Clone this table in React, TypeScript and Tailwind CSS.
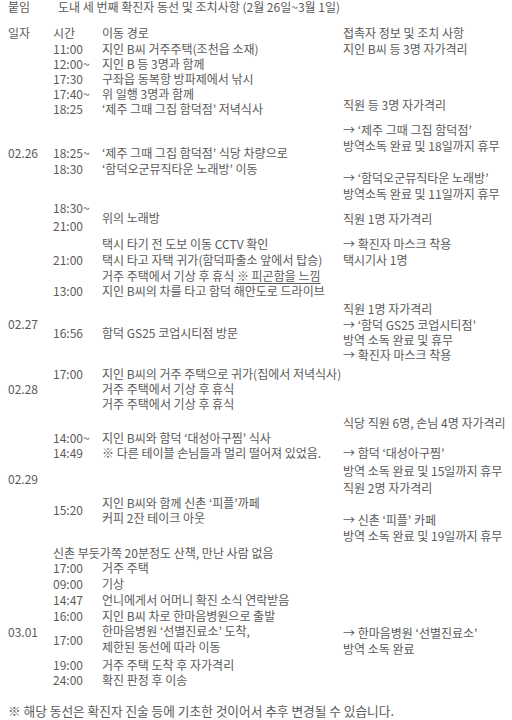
type Row = {
  time?: string;
  route?: React.ReactNode;
  cls: string;
};

const routeRows: Row[] = [
  { time: "11:00", route: "지인 B씨 거주주택(조천읍 소재)", cls: "mt-[1px]" },
  { time: "12:00~", route: "지인 B 등 3명과 함께", cls: "mt-0" },
  { time: "17:30", route: "구좌읍 동복항 방파제에서 낚시", cls: "mt-0" },
  { time: "17:40~", route: "위 일행 3명과 함께", cls: "mt-0" },
  { time: "18:25", route: "‘제주 그때 그집 함덕점’ 저녁식사", cls: "mt-0" },
  { time: "18:25~", route: "‘제주 그때 그집 함덕점’ 식당 차량으로", cls: "mt-[29px]" },
  { time: "18:30", route: "‘함덕오군뮤직타운 노래방’ 이동", cls: "mt-[1px]" },
];

const contacts: { text: string; cls: string }[] = [
  { text: "지인 B씨 등 3명 자가격리", cls: "mt-[1px]" },
  { text: "직원 등 3명 자가격리", cls: "mt-[41px]" },
  { text: "→ ‘제주 그때 그집 함덕점’", cls: "mt-[10px]" },
  { text: "방역소독 완료 및 18일까지 휴무", cls: "mt-[1px]" },
  { text: "→ ‘함덕오군뮤직타운 노래방’", cls: "mt-[17px]" },
  { text: "방역소독 완료 및 11일까지 휴무", cls: "mt-[1px]" },
  { text: "직원 1명 자가격리", cls: "mt-[10px]" },
  { text: "→ 확진자 마스크 착용", cls: "mt-[10px]" },
  { text: "택시기사 1명", cls: "mt-[1px]" },
  { text: "직원 1명 자가격리", cls: "mt-[34px]" },
  { text: "→ ‘함덕 GS25 코업시티점’", cls: "mt-[1px]" },
  { text: "방역 소독 완료 및 휴무", cls: "mt-0" },
  { text: "→ 확진자 마스크 착용", cls: "mt-0" },
  { text: "식당 직원 6명, 손님 4명 자가격리", cls: "mt-[53px]" },
  { text: "→ 함덕 ‘대성아구찜’", cls: "mt-[15px]" },
  { text: "방역 소독 완료 및 15일까지 휴무", cls: "mt-[3px]" },
  { text: "직원 2명 자가격리", cls: "mt-[2px]" },
  { text: "→ 신촌 ‘피플’ 카페", cls: "mt-[17px]" },
  { text: "방역 소독 완료 및 19일까지 휴무", cls: "mt-[1px]" },
  { text: "→ 한마음병원 ‘선별진료소’", cls: "mt-[82px]" },
  { text: "방역 소독 완료", cls: "mt-[1px]" },
];

function Line({ time, route, cls }: Row) {
  return (
    <div className={`flex h-[15px] items-center ${cls}`}>
      <span className="w-[49px] shrink-0">{time}</span>
      <span className="whitespace-nowrap">{route}</span>
    </div>
  );
}

export default function App() {
  return (
    <div className="w-[512px] h-[720px] overflow-hidden bg-white pl-[8px] text-[12px] leading-[15px] text-[#5a5a5a] font-['Noto_Sans_CJK_KR','Noto_Sans',sans-serif]">
      {/* 제목 */}
      <div className="flex h-[14px] items-center leading-[14px]">
        <span className="w-[50px]">붙임</span>
        <span className="whitespace-nowrap">도내 세 번째 확진자 동선 및 조치사항 (2월 26일~3월 1일)</span>
      </div>

      <div className="mt-[10.5px] flex">
        {/* 일자 */}
        <div className="flex w-[45px] shrink-0 flex-col">
          <div className="h-[15px]">일자</div>
          <div className="mt-[105px] h-[15px]">02.26</div>
          <div className="mt-[156px] h-[15px]">02.27</div>
          <div className="mt-[50px] h-[15px]">02.28</div>
          <div className="mt-[75px] h-[15px]">02.29</div>
          <div className="mt-[138px] h-[15px]">03.01</div>
        </div>

        {/* 시간 / 이동 경로 */}
        <div className="flex w-[290px] shrink-0 flex-col">
          <Line time="시간" route="이동 경로" cls="" />
          {routeRows.map((r, i) => (
            <Line key={i} {...r} />
          ))}

          <div className="mt-[23.5px] flex items-center">
            <div className="flex w-[49px] shrink-0 flex-col leading-[18px]">
              <span>18:30~</span>
              <span>21:00</span>
            </div>
            <span>위의 노래방</span>
          </div>
          <Line route="택시 타기 전 도보 이동 CCTV 확인" cls="mt-[0.5px]" />
          <Line time="21:00" route="택시 타고 자택 귀가(함덕파출소 앞에서 탑승)" cls="mt-[1px]" />
          <Line
            route={
              <>
                거주 주택에서 기상 후 휴식 <span className="underline underline-offset-2">※ 피곤함을 느낌</span>
              </>
            }
            cls="mt-[1px]"
          />
          <Line time="13:00" route="지인 B씨의 차를 타고 함덕 해안도로 드라이브" cls="mt-0" />
          <Line time="16:56" route="함덕 GS25 코업시티점 방문" cls="mt-[27px]" />
          <Line time="17:00" route="지인 B씨의 거주 주택으로 귀가(집에서 저녁식사)" cls="mt-[26px]" />
          <Line route="거주 주택에서 기상 후 휴식" cls="mt-0" />
          <Line route="거주 주택에서 기상 후 휴식" cls="mt-0" />
          <Line time="14:00~" route="지인 B씨와 함덕 ‘대성아구찜’ 식사" cls="mt-[19px]" />
          <Line time="14:49" route="※ 다른 테이블 손님들과 멀리 떨어져 있었음." cls="mt-0" />

          <div className="mt-[35px] flex items-center">
            <span className="w-[49px] shrink-0">15:20</span>
            <div className="flex flex-col">
              <span>지인 B씨와 함께 신촌 ‘피플’까페</span>
              <span>커피 2잔 테이크 아웃</span>
            </div>
          </div>

          <div className="mt-[20px] h-[15px] whitespace-nowrap">신촌 부둣가쪽 20분정도 산책, 만난 사람 없음</div>
          <Line time="17:00" route="거주 주택" cls="mt-0" />
          <Line time="09:00" route="기상" cls="mt-[1px]" />
          <Line time="14:47" route="언니에게서 어머니 확진 소식 연락받음" cls="mt-[1px]" />
          <Line time="16:00" route="지인 B씨 차로 한마음병원으로 출발" cls="mt-[1px]" />

          <div className="mt-[0.5px] flex items-center">
            <span className="w-[49px] shrink-0">17:00</span>
            <div className="flex flex-col leading-[16px]">
              <span>한마음병원 ‘선별진료소’ 도착,</span>
              <span>제한된 동선에 따라 이동</span>
            </div>
          </div>
          <Line time="19:00" route="거주 주택 도착 후 자가격리" cls="mt-[1.5px]" />
          <Line time="24:00" route="확진 판정 후 이송" cls="mt-[0.5px]" />
        </div>

        {/* 접촉자 정보 및 조치 사항 */}
        <div className="flex flex-col whitespace-nowrap">
          <div className="h-[15px]">접촉자 정보 및 조치 사항</div>
          {contacts.map((c, i) => (
            <div key={i} className={`h-[15px] ${c.cls}`}>
              {c.text}
            </div>
          ))}
        </div>
      </div>

      <div className="mt-[16px] h-[15px] whitespace-nowrap text-[12.7px]">
        ※ 해당 동선은 확진자 진술 등에 기초한 것이어서 추후 변경될 수 있습니다.
      </div>
    </div>
  );
}
